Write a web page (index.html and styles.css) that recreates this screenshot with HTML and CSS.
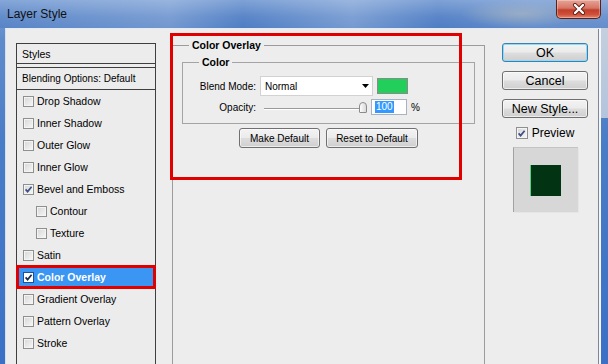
FILE: index.html
```html
<!DOCTYPE html>
<html lang="en">
<head>
  <meta charset="UTF-8">
  <title>Layer Style</title>
  <link rel="stylesheet" href="styles.css">
</head>
<body>
  <div class="window">
    <div class="titlebar">
      <span class="title">Layer Style</span>
      <span class="close">
        <svg width="14" height="12" viewBox="0 0 14 12">
          <path d="M3 2 L11 10 M11 2 L3 10" stroke="#5a1c14" stroke-width="4" stroke-linecap="round"/>
          <path d="M3 2 L11 10 M11 2 L3 10" stroke="#fff" stroke-width="2.4" stroke-linecap="round"/>
        </svg>
      </span>
    </div>

    <div class="client">
      <ul class="styles">
        <li class="head">Styles</li>
        <li class="blend">Blending Options: Default</li>
        <li><span class="cb"></span>Drop Shadow</li>
        <li><span class="cb"></span>Inner Shadow</li>
        <li><span class="cb"></span>Outer Glow</li>
        <li><span class="cb"></span>Inner Glow</li>
        <li><span class="cb on"><svg viewBox="0 0 9 9"><path d="M1.6 4.4 L3.6 6.6 L7.6 1.8"/></svg></span>Bevel and Emboss</li>
        <li class="sub"><span class="cb"></span>Contour</li>
        <li class="sub"><span class="cb"></span>Texture</li>
        <li><span class="cb"></span>Satin</li>
        <li class="selected"><span class="cb on"><svg viewBox="0 0 9 9"><path d="M1.6 4.4 L3.6 6.6 L7.6 1.8"/></svg></span>Color Overlay</li>
        <li><span class="cb"></span>Gradient Overlay</li>
        <li><span class="cb"></span>Pattern Overlay</li>
        <li><span class="cb"></span>Stroke</li>
      </ul>

      <fieldset class="panel">
        <legend>Color Overlay</legend>
        <fieldset class="group">
          <legend>Color</legend>
          <div class="rows">
            <div class="row">
              <span class="label">Blend Mode:</span>
              <div class="select">
                <span>Normal</span>
                <svg class="arrow" width="7" height="4" viewBox="0 0 7 4"><path d="M0 0 H7 L3.5 4 Z"/></svg>
              </div>
              <span class="swatch"></span>
            </div>
            <div class="row opacity">
              <span class="label">Opacity:</span>
              <div class="slider"><span class="track"></span><span class="thumb"></span></div>
              <div class="field"><span class="sel">100</span></div>
              <span class="unit">%</span>
            </div>
          </div>
        </fieldset>
        <div class="defaults">
          <button class="btn make">Make Default</button>
          <button class="btn reset">Reset to Default</button>
        </div>
      </fieldset>

      <div class="actions">
        <button class="btn big ok">OK</button>
        <button class="btn big">Cancel</button>
        <button class="btn big">New Style...</button>
        <div class="preview-check">
          <span class="cb on"><svg viewBox="0 0 9 9"><path d="M1.6 4.4 L3.6 6.6 L7.6 1.8"/></svg></span>Preview
        </div>
        <div class="preview"><span class="sample"></span></div>
      </div>

      <div class="callout"></div>
    </div>
  </div>
</body>
</html>
```

FILE: styles.css
```css
body { margin: 0; font-family: "Liberation Sans", Arial, sans-serif; color: #000; }

.window {
  width: 608px; height: 364px; overflow: hidden;
  display: flex; flex-direction: column;
  background:
    linear-gradient(#c4cfde, #b3c4dc) right 28px / 7px 90px no-repeat,
    linear-gradient(180deg, #7ea2d6 0, #5f8bcb 40px, #4a7dc7 140px, #3a70c6 100%);
}

/* title bar */
.titlebar {
  height: 28px; flex: none; display: flex; align-items: flex-start;
  background:
    radial-gradient(ellipse 60px 14px at 520px 14px, rgba(185,190,190,.55), rgba(185,190,190,0)),
    linear-gradient(90deg, rgba(255,255,255,.05) 0, rgba(255,255,255,.2) 28%, rgba(255,255,255,0) 40%, rgba(255,255,255,.22) 58%, rgba(255,255,255,0) 72%, rgba(255,255,255,.12) 88%),
    linear-gradient(180deg, #7fa2d6 0, #5a86c8 60%, #4f7ec4 100%);
}
.title { padding: 7px 0 0 7px; font-size: 12px; color: #111; }
.close {
  margin-left: auto; margin-right: 7px; width: 45px; height: 19px; box-sizing: border-box;
  display: flex; align-items: center; justify-content: center;
  border: 1px solid #5c2019; border-top: none; border-radius: 0 0 5px 5px;
  background: linear-gradient(180deg, #e6a497 0, #d77565 45%, #c13f2c 55%, #cf4f3a 80%, #e58568 100%);
  box-shadow: inset 0 0 0 1px rgba(255,255,255,.3);
}

/* dialog body */
.client {
  flex: 1; min-height: 0; position: relative; overflow: hidden;
  margin: 0 7px 0 5px; padding: 10px 0 0 10px;
  display: flex; align-items: flex-start;
  background: #ededed;
  border-top: 1px solid #e4eaf2; border-left: 1px solid #d6dfeb;
  box-shadow: inset -2px 0 0 #f4f6f9, inset -3px 0 0 #7d8795;
}

/* styles list */
.styles {
  list-style: none; margin: 4px 16px 0 0; padding: 0;
  width: 140px; height: 330px; flex: none; box-sizing: border-box;
  border: 1px solid #3f3f3f; background: #ececec;
  font-size: 10.5px;
}
.styles li { height: 22px; display: flex; align-items: center; padding-left: 6px; }
.styles .head { height: 19px; padding-left: 5px; border-bottom: 1px solid #3f3f3f; margin-bottom: 3px; }
.styles .blend { height: 21px; padding-left: 5px; border-top: 1px solid #3f3f3f; border-bottom: 1px solid #3f3f3f; font-size: 10px; }
.styles .sub { padding-left: 19px; }
.styles .selected {
  background: #3a95f3; color: #fff; font-weight: bold;
  outline: 3px solid #e00000; outline-offset: -2px;
}

.cb {
  width: 11px; height: 11px; box-sizing: border-box; flex: none; margin-right: 3px;
  border: 1px solid #8e8f8f;
  background: linear-gradient(135deg, #d6d6d6, #f7f7f7);
  box-shadow: inset 0 0 0 1px #f4f4f4;
  display: flex; align-items: center; justify-content: center;
}
.cb svg { width: 9px; height: 9px; fill: none; stroke: #3a4f86; stroke-width: 1.7; }
.selected .cb { background: #fff; box-shadow: none; border-color: #1d4f9a; }
.selected .cb svg { stroke: #1c2a50; }

/* main panel */
fieldset { margin: 0; padding: 0; min-width: 0; border: 1px solid #9c9c9c; }
legend { margin-left: 16px; padding: 0 3px; font-size: 10.5px; font-weight: bold; line-height: 13px; }
.panel { width: 313px; height: 330px; flex: none; box-sizing: border-box; margin-right: 17px; }
.group { margin: 4px 9px 0; border-color: #a4a4a4; }

.rows { padding: 7px 0 8px; font-size: 10px; }
.row { display: flex; align-items: center; height: 20px; }
.row.opacity { height: 16px; margin-top: 3px; }
.label { width: 73px; text-align: right; margin-right: 4px; }
.select {
  width: 113px; height: 20px; box-sizing: border-box;
  display: flex; align-items: center; padding: 0 3px 0 4px;
  background: #fff; border: 1px solid #d2d2d2;
}
.arrow { margin-left: auto; fill: #000; }
.swatch { width: 31px; height: 16px; box-sizing: border-box; margin-left: 4px; background: #22cf5b; border: 1px solid #8a8a8a; }

.slider { width: 108px; display: flex; align-items: center; padding-left: 4px; box-sizing: border-box; }
.track { flex: 1; height: 0; border-top: 1px solid #9a9a9a; border-bottom: 1px solid #fff; margin-top: 3px; }
.thumb {
  width: 8px; height: 11px; box-sizing: border-box; margin-right: 1px;
  border: 1px solid #8b8b8b; border-radius: 4px 4px 1px 1px;
  background: linear-gradient(90deg, #fdfdfd, #d9d9d9);
}
.field {
  width: 36px; height: 16px; box-sizing: border-box; margin-left: 3px;
  border: 1px solid #a9b3bf; background: #fff;
  display: flex; align-items: center; padding-left: 3px;
}
.sel { background: #3399ff; color: #fff; padding: 0 1px; line-height: 12px; }
.unit { margin-left: 4px; }

.btn {
  display: block; padding: 0; box-sizing: border-box;
  font-family: inherit; color: #000;
  border: 1px solid #707070; border-radius: 3px;
  background: linear-gradient(180deg, #f3f3f3 0, #ebebeb 48%, #dddddd 52%, #cfcfcf 100%);
  box-shadow: inset 0 0 0 1px rgba(255,255,255,.6);
}
.defaults { display: flex; justify-content: center; gap: 6px; margin-top: 4px; }
.defaults .btn { height: 20px; font-size: 10px; }
.make { width: 81px; }
.reset { width: 92px; }

/* right column */
.actions { width: 86px; flex: none; margin-top: 4px; }
.big { width: 86px; height: 19px; font-size: 12.5px; margin-bottom: 9px; }
.ok { border-color: #3c7fb1; box-shadow: inset 0 0 0 1px #8edcf4; }
.preview-check { display: flex; align-items: center; justify-content: center; font-size: 12px; height: 12px; }
.preview-check .cb { width: 12px; height: 12px; margin-right: 4px; }
.preview {
  width: 65px; height: 65px; box-sizing: border-box; margin: 8px auto 0;
  background: #d7d7d7; border-left: 1px solid #a2a2a2; border-top: 1px solid #c4c4c4;
  box-shadow: 1px 1px 0 #e6e6e6;
  display: flex; align-items: center; justify-content: center;
}
.sample { width: 31px; height: 31px; box-sizing: border-box; background: #023414; border-left: 1px solid #52d47e; }

/* red annotation frame */
.callout {
  position: absolute; left: 164px; top: 4px; width: 292px; height: 147px;
  box-sizing: border-box; border: 3px solid #e00000; pointer-events: none;
}
```
